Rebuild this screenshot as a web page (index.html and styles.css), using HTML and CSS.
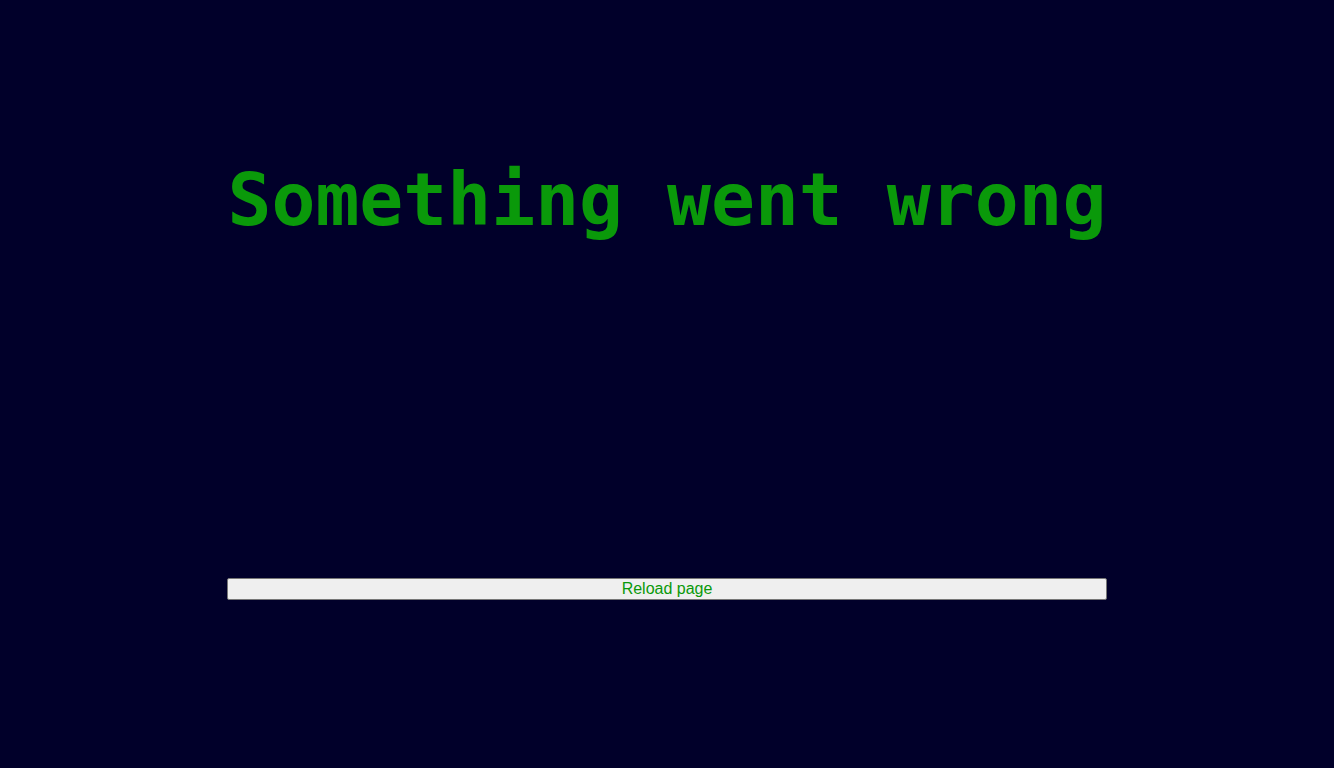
FILE: index.html
```html
<!DOCTYPE html>
<html>
<head>
<meta charset="utf-8">
<link rel="stylesheet" href="styles.css">
</head>
<body>
<main class="error">
  <h1 class="error-title">Something went wrong</h1>
  <button class="reload" type="button">Reload page</button>
</main>
</body>
</html>
```
FILE: styles.css
```css
html, body {
  margin: 0;
  padding: 0;
  height: 100%;
}
body {
  background: #01002a;
}
.error {
  width: 880px;
  margin: 0 auto;
  padding-top: 157px;
  display: flex;
  flex-direction: column;
}
.error-title {
  margin: 0;
  font-family: "DejaVu Sans Mono", monospace;
  font-weight: bold;
  font-size: 73px;
  line-height: 85px;
  color: #0a990a;
  text-align: center;
  white-space: nowrap;
}
.reload {
  margin-top: 336px;
  height: 22px;
  width: 880px;
  padding: 0;
  font-family: "Liberation Sans", Arial, sans-serif;
  font-size: 16px;
  line-height: 20px;
  color: #0a990a;
  background: #efefef;
  border: 1px solid #767676;
  border-radius: 2px;
}
```
